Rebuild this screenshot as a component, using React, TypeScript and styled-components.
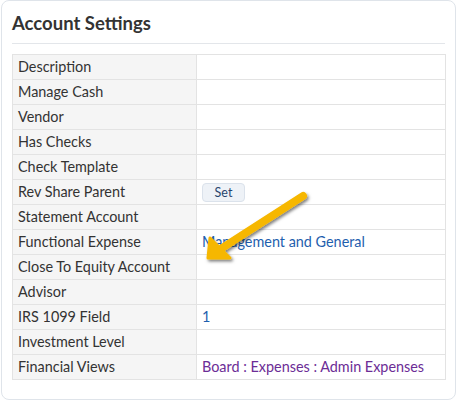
import styled, { createGlobalStyle } from 'styled-components';

interface Setting {
  label: string;
  value?: string;
  kind?: 'link' | 'visited' | 'button';
}

const settings: Setting[] = [
  { label: 'Description' },
  { label: 'Manage Cash' },
  { label: 'Vendor' },
  { label: 'Has Checks' },
  { label: 'Check Template' },
  { label: 'Rev Share Parent', value: 'Set', kind: 'button' },
  { label: 'Statement Account' },
  { label: 'Functional Expense', value: 'Management and General', kind: 'link' },
  { label: 'Close To Equity Account' },
  { label: 'Advisor' },
  { label: 'IRS 1099 Field', value: '1', kind: 'link' },
  { label: 'Investment Level' },
  { label: 'Financial Views', value: 'Board : Expenses : Admin Expenses', kind: 'visited' },
];

const App = () => {
  return (
    <>
      <GlobalStyle />
      <StyledCard>
        <StyledTitle>Account Settings</StyledTitle>
        <StyledTable>
          <tbody>
            {settings.map((s) => (
              <tr key={s.label}>
                <StyledLabel>{s.label}</StyledLabel>
                <StyledValue>
                  {s.kind === 'button' && <StyledButton>{s.value}</StyledButton>}
                  {(s.kind === 'link' || s.kind === 'visited') && (
                    <StyledLink $visited={s.kind === 'visited'} href="#">
                      {s.value}
                    </StyledLink>
                  )}
                </StyledValue>
              </tr>
            ))}
          </tbody>
        </StyledTable>

        <StyledArrow width="120" height="85" viewBox="0 0 120 85">
          <defs>
            <filter id="shadow" x="-20%" y="-20%" width="140%" height="140%">
              <feDropShadow dx="1.5" dy="2" stdDeviation="1.5" floodColor="#000" floodOpacity="0.5" />
            </filter>
          </defs>
          <g filter="url(#shadow)" fill="#f6b704" stroke="#f6b704" strokeLinejoin="round" strokeLinecap="round">
            <line x1="108" y1="12" x2="24" y2="66" strokeWidth="8" />
            <polygon points="13,74 15,54 35,74" strokeWidth="3" />
          </g>
        </StyledArrow>
      </StyledCard>
    </>
  );
};

/**
 * styles
 */
const GlobalStyle = createGlobalStyle`
  body {
    margin: 0;
    background: #fff;
    font-family: Lato, "Liberation Sans", sans-serif;
    color: #333;
  }
`;

const StyledCard = styled.div`
  position: relative;
  box-sizing: border-box;
  margin-left: 1px;
  width: 455px;
  height: 400px;
  padding: 0 10px;
  border: 1px solid #dfe4ea;
  border-radius: 8px;
  background: #fff;
`;

const StyledTitle = styled.h3`
  margin: 0 0 10px;
  padding: 11px 0 8px;
  font-size: 18.5px;
  font-weight: 700;
  line-height: 23px;
  color: #333;
  border-bottom: 1px solid #e3e6ea;
`;

const StyledTable = styled.table`
  width: 434px;
  border-collapse: collapse;
  font-size: 14.4px;

  td {
    height: 24px;
    padding: 0 5px;
    border: 1px solid #e3e3e3;
    line-height: 18px;
  }
`;

const StyledLabel = styled.td`
  width: 173px;
  background: #f5f5f5;
  color: #333;
`;

const StyledValue = styled.td`
  background: #fff;
`;

const StyledLink = styled.a<{ $visited?: boolean }>`
  color: ${({ $visited }) => ($visited ? '#6c2d96' : '#1f5fae')};
  text-decoration: none;
`;

const StyledButton = styled.button`
  box-sizing: border-box;
  width: 43px;
  height: 19px;
  padding: 0;
  font-family: inherit;
  font-size: 12.5px;
  color: #27456e;
  background: #eef2f7;
  border: 1px solid #dbe2eb;
  border-radius: 4px;
  vertical-align: middle;
`;

const StyledArrow = styled.svg`
  position: absolute;
  left: 193px;
  top: 183px;
  overflow: visible;
`;

export default App;
